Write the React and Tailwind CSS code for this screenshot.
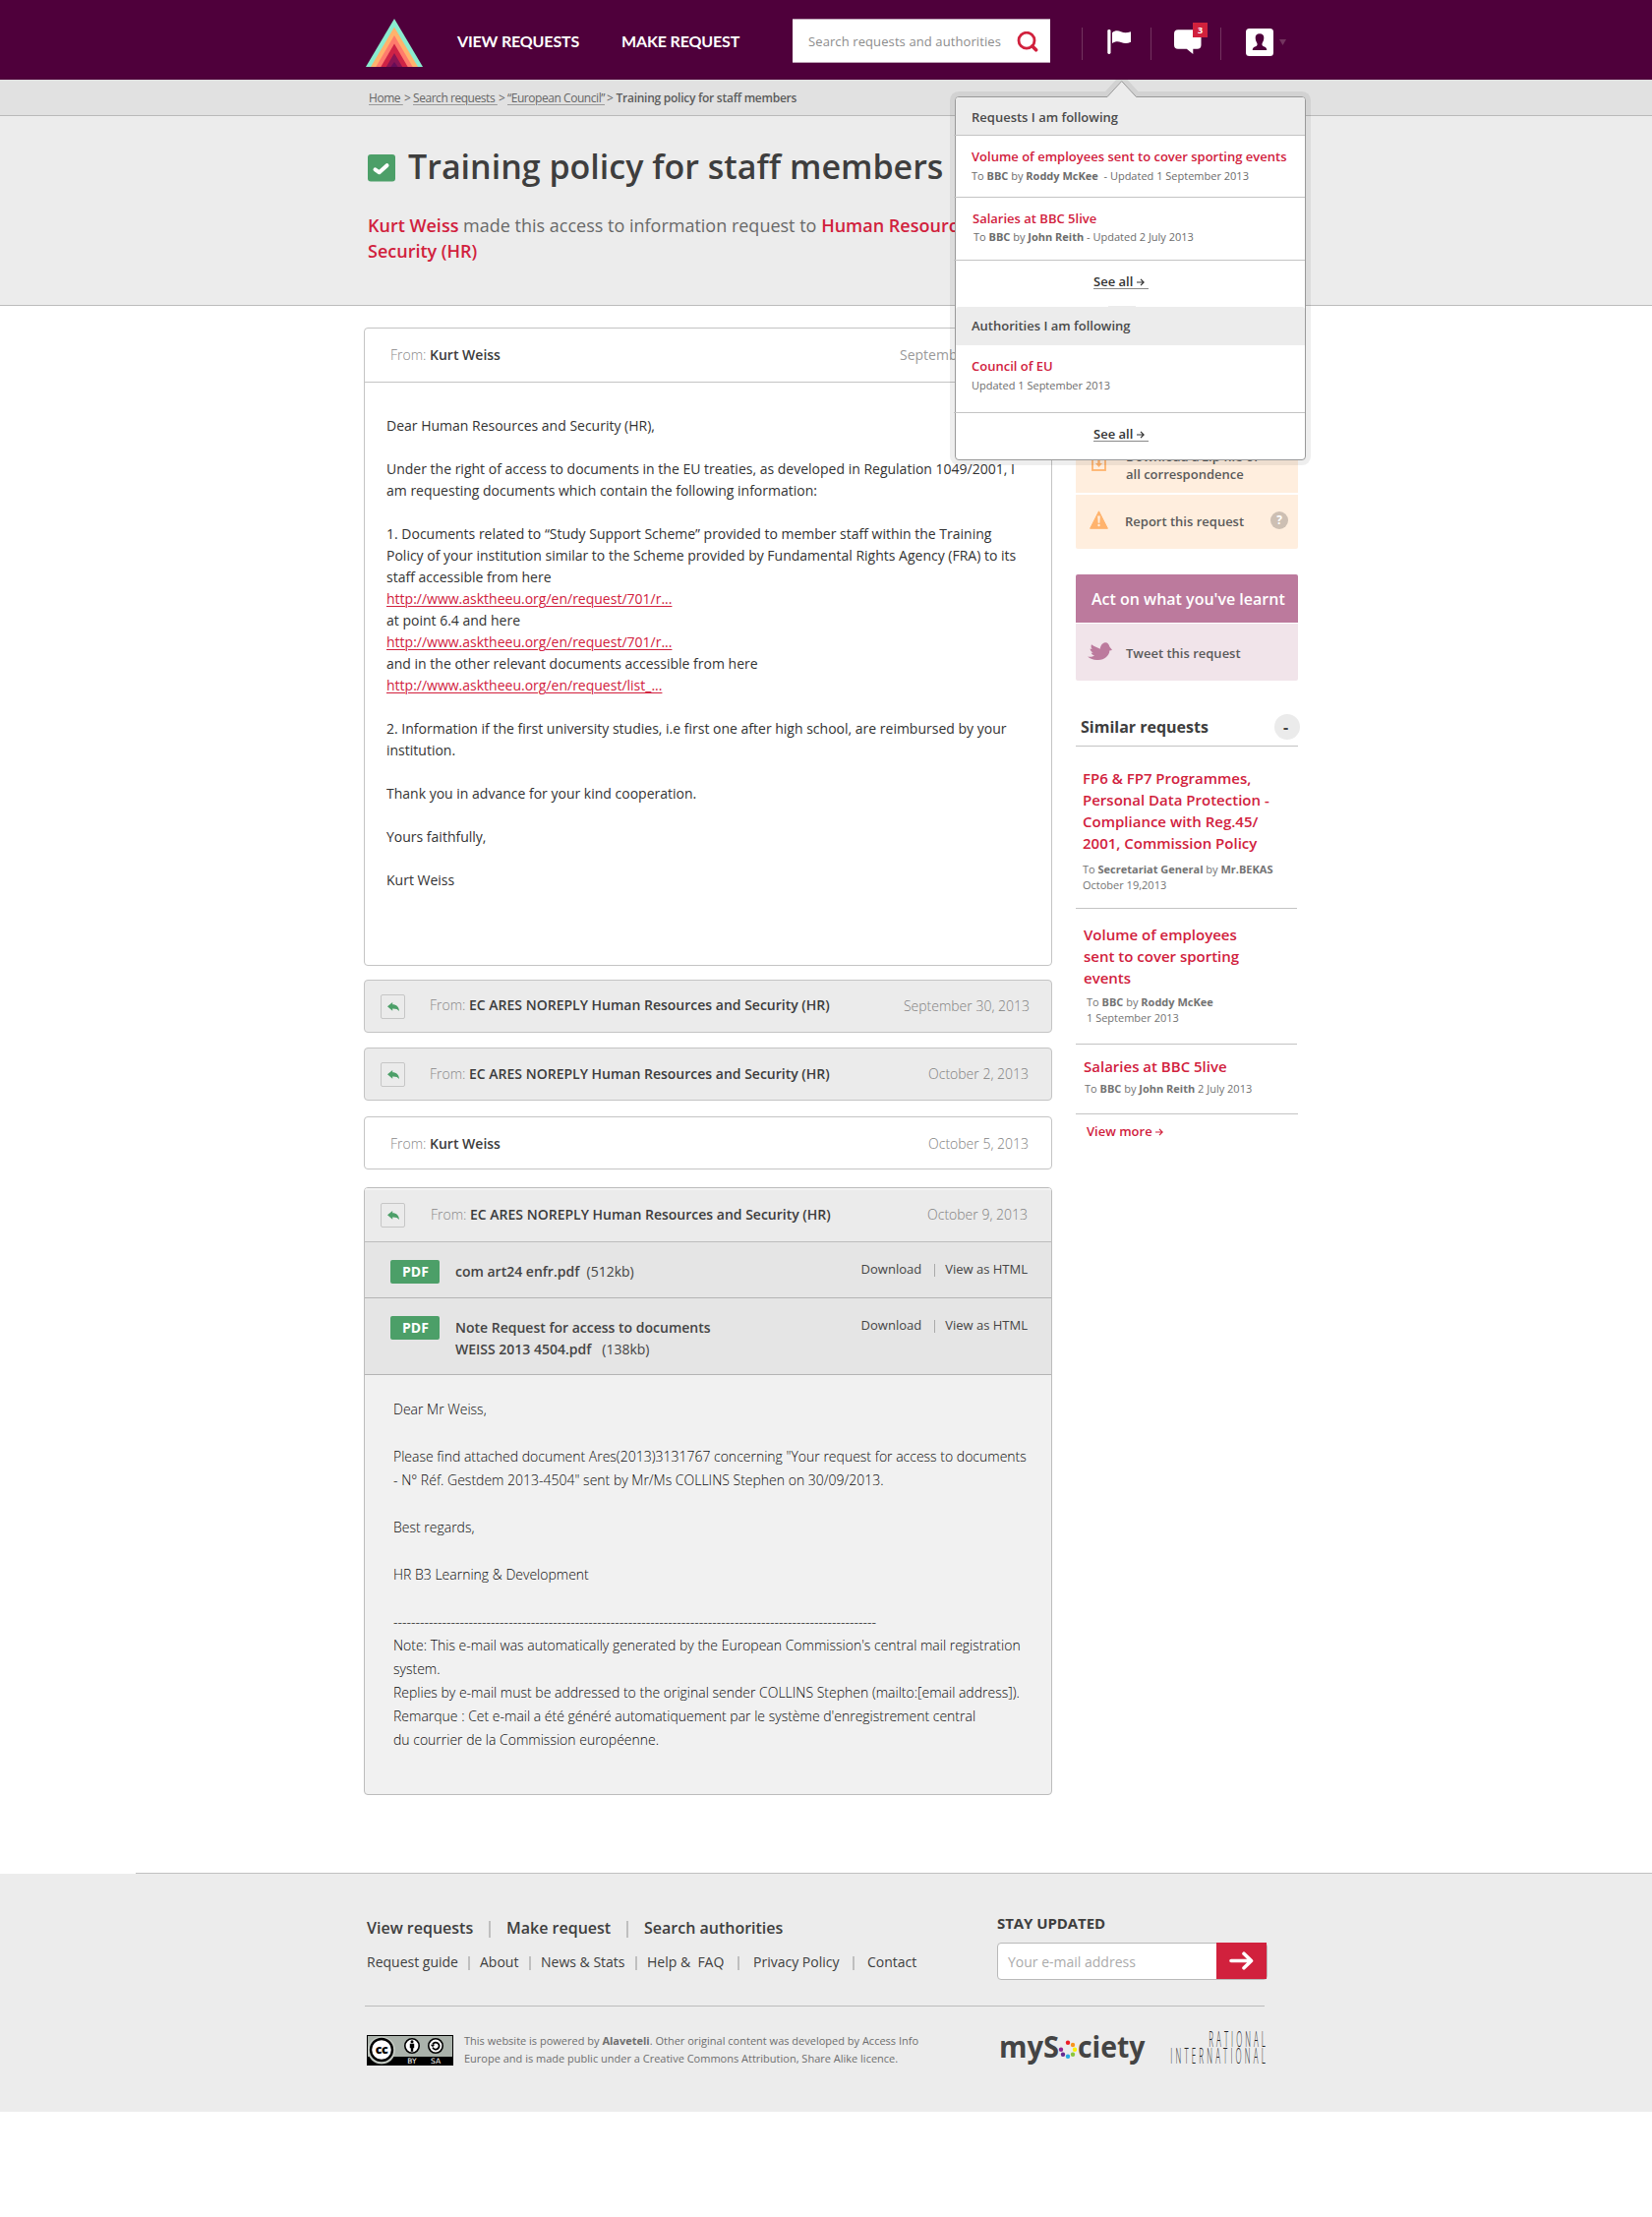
function Arrow({ className }) {
  return (
    <svg viewBox="0 0 8 8" className={className} fill="none" stroke="currentColor" strokeWidth="1.2">
      <path d="M0 4h7M4 0.9 7.1 4 4 7.1" />
    </svg>
  );
}

function Logo() {
  return (
    <svg width="58" height="49" viewBox="0 0 58 49" className="mt-[19px]">
      <path d="M29 0 58 49H0z" fill="#8aecd0" />
      <path d="M29 8.5 53 49H5z" fill="#ffb36d" />
      <path d="M29 17 47.7 49H10.3z" fill="#ff7b6c" />
      <path d="M29 25.5 42.7 49H15.3z" fill="#cf2346" />
      <path d="M29 35 37.2 49H20.8z" fill="#8a1454" />
      <path d="M29 44 32.7 49H25.3z" fill="#650d59" />
    </svg>
  );
}

function Header() {
  return (
    <header className="flex h-[81px] items-start bg-[#4f003b] pl-[372px] text-white">
      <Logo />
      <nav className="mt-[32px] ml-[35px] flex font-['Lato',sans-serif] text-[16px] leading-[19px] font-bold tracking-[-0.15px] whitespace-nowrap">
        <a className="w-[167px]">VIEW REQUESTS</a>
        <a className="w-[174px]">MAKE REQUEST</a>
      </nav>
      <div className="mt-[19px] flex h-[45px] w-[262px] items-start justify-between border-y border-[#bb9fb4] bg-white pr-[12px] pl-[16px]">
        <span className="mt-[13px] text-[13px] leading-[18px] tracking-[0.1px] whitespace-nowrap text-[#8c8c8c]">Search requests and authorities</span>
        <svg width="22" height="22" viewBox="0 0 22 22" className="mt-[12px]" fill="none" stroke="#d1213d">
          <circle cx="10" cy="9.2" r="8" strokeWidth="2.8" />
          <path d="M15.8 15 19.6 18.8" strokeWidth="3.6" strokeLinecap="round" />
        </svg>
      </div>
      <i className="mt-[28px] ml-[32px] h-[33px] w-px bg-[#73345f]" />
      <svg width="24" height="25" viewBox="0 0 24 25" className="mt-[30px] ml-[25px]" fill="#fff">
        <rect x="0.3" y="0" width="3.2" height="25" rx="1.4" />
        <path d="M5 3.2C8 .8 11 .9 14 2.3c3.300 1.300 6 1.100 10 0V12.800c-3.500 1.600-6.500 1.700-10 .2-3-1.200-6-1-9 1z" />
      </svg>
      <i className="mt-[28px] ml-[20px] h-[33px] w-px bg-[#73345f]" />
      <div className="relative mt-[30px] ml-[23px] h-[25px] w-[28px]">
        <svg width="28" height="25" viewBox="0 0 28 25" fill="#fff">
          <path d="M4 .3H23.500a4 4 0 0 1 4 4V15.700a4 4 0 0 1-4 4H19.300V25L12.800 19.700H4a4 4 0 0 1-4-4V4.300a4 4 0 0 1 4-4z" />
        </svg>
        <span className="absolute -top-[7px] left-[19px] h-[15px] w-[15px] bg-[#d1213d] text-center text-[9px] leading-[15px] font-bold">3</span>
      </div>
      <i className="mt-[28px] ml-[19px] h-[33px] w-px bg-[#73345f]" />
      <svg width="28" height="28" viewBox="0 0 28 28" className="mt-[29px] ml-[25px]">
        <rect width="28" height="28" rx="3.500" fill="#fff" />
        <path d="M14 5.300c3 0 4.500 1.700 4.300 4.500-.1 2.400-.9 3.600-1.700 5.200-.5 1.500 0 2.700 1.500 3.200 2 .6 3 1.300 3.200 3.800H6.700c.2-2.500 1.200-3.200 3.200-3.800 1.500-.5 2-1.700 1.500-3.200-.8-1.600-1.600-2.800-1.700-5.200-.2-2.800 1.300-4.500 4.300-4.500z" fill="#4f003b" />
      </svg>
      <svg width="7" height="6" viewBox="0 0 7 6" className="mt-[40px] ml-[6px]">
        <path d="M0 0h7L3.500 6z" fill="#73345f" />
      </svg>
    </header>
  );
}

function Breadcrumb() {
  return (
    <div className="flex h-[37px] border-b border-[#b9b9b9] bg-[#e1e1e1] pt-[10px] pl-[375px] text-[12px] leading-[17px] tracking-[-0.45px] whitespace-nowrap text-[#666]">
      <a className="w-[36px] underline decoration-[#999] underline-offset-2">Home&nbsp;</a>
      <span className="w-[9px]">&gt;</span>
      <a className="w-[87px] underline decoration-[#999] underline-offset-2">Search requests&nbsp;</a>
      <span className="w-[9px]">&gt;</span>
      <a className="w-[101px] underline decoration-[#999] underline-offset-2">“European Council”</a>
      <span className="w-[9.500px]">&gt;</span>
      <span className="font-semibold tracking-[-0.26px] text-[#5c5c5c]">Training policy for staff members</span>
    </div>
  );
}

function TitleBand() {
  return (
    <section className="h-[193px] border-b border-[#bcbcbc] bg-[#ececec] pt-[28px] pl-[374px]">
      <div className="flex items-start">
        <svg width="28" height="28" viewBox="0 0 28 28" className="mt-[11px]">
          <rect width="28" height="27.500" rx="3" fill="#4c9f68" />
          <path d="M7.500 15.300 11.700 18.300 19.500 11.200" fill="none" stroke="#fff" strokeWidth="4" strokeLinecap="round" strokeLinejoin="round" />
        </svg>
        <h1 className="ml-[13px] text-[34px] leading-[46px] font-semibold whitespace-nowrap text-[#3e3e3e]">Training policy for staff members</h1>
      </div>
      <p className="mt-[24px] w-[740px] text-[18px] leading-[26px] text-[#696969]">
        <b className="font-semibold text-[#d1213d]">Kurt Weiss</b> made this access to information request to{" "}
        <b className="font-semibold text-[#d1213d]">
          Human Resources and
          <br />
          Security (HR)
        </b>
      </p>
    </section>
  );
}

function Divider() {
  return <div className="-ml-[2px] h-px bg-[#c4c4c4]" />;
}

function SeeAll() {
  return (
    <a className="ml-[140px] flex h-[17px] w-[56px] items-start border-b border-[#8a8a8a] text-[13px] leading-[18px] font-semibold whitespace-nowrap text-[#333]">
      See all
      <Arrow className="mt-[6px] ml-[4px] h-[8px] w-[8px]" />
    </a>
  );
}

function FollowMenu() {
  return (
    <div className="absolute top-[98px] left-[971px] h-[370px] w-[357px] rounded-[4px] border border-[#999] bg-white text-[11px] leading-[15px] whitespace-nowrap text-[#6c6c6c] shadow-[0_0_0_5px_rgba(0,0,0,0.065)] [&_b]:font-bold [&_h3]:text-[13px] [&_h3]:leading-[18px] [&_h3]:font-semibold [&_h3]:text-[#d1213d]">
      <svg width="50" height="18" viewBox="0 0 50 18" className="absolute -top-[18px] left-[144px]">
        <path d="M8 12 19 0H30.500L41.500 12H35L24.700 1.300 14.500 12z" fill="#000" fillOpacity="0.065" />
        <path d="M10 18V17.500L24.700 1.500 39.500 17.500V18z" fill="#ececec" />
        <path d="M10 17.500 24.700 1.500 39.500 17.500" fill="none" stroke="#999" />
      </svg>
      <div className="h-[38px] rounded-t-[3px] bg-[#ececec] pt-[11px] pl-[16px] text-[13px] leading-[18px] font-semibold text-[#4a4a4a]">Requests I am following</div>
      <Divider />
      <div className="h-[62px] pt-[12px] pl-[16px]">
        <h3>Volume of employees sent to cover sporting events</h3>
        <p className="mt-[3px]">To <b>BBC</b> by <b>Roddy McKee</b>&nbsp; - Updated 1 September 2013</p>
      </div>
      <Divider />
      <div className="h-[63px] pt-[12px] pl-[17px]">
        <h3>Salaries at BBC 5live</h3>
        <p className="mt-[2px] ml-px">To <b>BBC</b> by <b>John Reith</b> - Updated 2 July 2013</p>
      </div>
      <Divider />
      <div className="h-[46px] pt-[12px]">
        <SeeAll />
      </div>
      <div className="ml-[155px] h-px w-[28px] bg-[#ececec]" />
      <div className="h-[39px] rounded-t-[3px] bg-[#ececec] pt-[10px] pl-[16px] text-[13px] leading-[18px] font-semibold text-[#4a4a4a]">Authorities I am following</div>
      <div className="h-[68px] pt-[12px] pl-[16px]">
        <h3>Council of EU</h3>
        <p className="mt-[3px]">Updated 1 September 2013</p>
      </div>
      <Divider />
      <div className="pt-[12px]">
        <SeeAll />
      </div>
    </div>
  );
}

function ReplyButton({ className }) {
  return (
    <span className={"mr-[25px] flex h-[25px] w-[25px] items-center justify-center rounded-[2px] border border-[#c6c6c6] " + className}>
      <svg width="12" height="9" viewBox="0 0 12 9" fill="#4c9f68">
        <path d="M0 4.300 5.200 0V2.300C9.300 2.300 11.600 4.600 12 9 10.500 7 8.500 6.300 5.200 6.400V8.700z" />
      </svg>
    </span>
  );
}

function From({ name, className }) {
  return (
    <span className={"text-[14px] leading-[19px] font-light text-[#888] " + className}>
      From: <b className="font-semibold text-[#3c3c3c]">{name}</b>
    </span>
  );
}

function MessageDate({ children, className }) {
  return <span className={"ml-auto text-[14px] leading-[19px] " + className}>{children}</span>;
}

const HR = "EC ARES NOREPLY Human Resources and Security (HR)";

function Attachment({ name, size, className }) {
  return (
    <div className={"flex items-start border-b border-[#b4b4b4] bg-[#e5e5e5] pt-[18px] pr-[24px] pl-[26px] text-[14px] text-[#444] " + className}>
      <span className="h-[24px] w-[50px] rounded-[2px] bg-[#4c9f68] pt-[2px] pl-px text-center leading-[19px] font-bold text-white">PDF</span>
      <span className="mt-px ml-[16px] leading-[22px] whitespace-pre-line">
        <b className="font-semibold">{name}</b>
        {size}
      </span>
      <span className="ml-auto flex text-[13px] leading-[18px]">
        <a>Download</a>
        <i className="mt-[4px] mr-[10px] ml-[13px] h-[13px] w-px bg-[#aaa]" />
        <a>View as HTML</a>
      </span>
    </div>
  );
}

function Link({ children }) {
  return <a className="text-[#d1213d] underline decoration-1 underline-offset-2">{children}</a>;
}

function Thread() {
  return (
    <div className="w-[700px] pt-[22px] whitespace-nowrap">
      <article className="h-[649px] rounded-[4px] border border-[#c4c4c4]">
        <div className="flex h-[55px] border-b border-[#c4c4c4] pr-[23px] pl-[26px]">
          <From name="Kurt Weiss" className="mt-[17px]" />
          <MessageDate className="mt-[17px] text-[#999]">September 18, 2013</MessageDate>
        </div>
        <div className="pt-[33px] pl-[22px] text-[14px] leading-[22px] whitespace-pre text-[#333]">
          <p>Dear Human Resources and Security (HR),</p>
          <p className="mt-[22px]">Under the right of access to documents in the EU treaties, as developed in Regulation 1049/2001, I</p>
          <p>am requesting documents which contain the following information:</p>
          <p className="mt-[22px]">1. Documents related to “Study Support Scheme” provided to member staff within the Training</p>
          <p>Policy of your institution similar to the Scheme provided by Fundamental Rights Agency (FRA) to its</p>
          <p>staff accessible from here</p>
          <p><Link>http://www.asktheeu.org/en/request/701/r...</Link></p>
          <p>at point 6.4 and here</p>
          <p><Link>http://www.asktheeu.org/en/request/701/r...</Link></p>
          <p>and in the other relevant documents accessible from here</p>
          <p><Link>http://www.asktheeu.org/en/request/list_...</Link></p>
          <p className="mt-[22px]">2. Information if the first university studies, i.e first one after high school, are reimbursed by your</p>
          <p>institution.</p>
          <p className="mt-[22px]">Thank you in advance for your kind cooperation.</p>
          <p className="mt-[22px]">Yours faithfully,</p>
          <p className="mt-[22px]">Kurt Weiss</p>
        </div>
      </article>

      <article className="mt-[14px] flex h-[54px] rounded-[4px] border border-[#c4c4c4] bg-[#ebebeb] pr-[22px] pl-[16px]">
        <ReplyButton className="mt-[14px]" />
        <From name={HR} className="mt-[15px]" />
        <MessageDate className="mt-[16px] font-light text-[#808080]">September 30, 2013</MessageDate>
      </article>
      <article className="mt-[15px] flex h-[54px] rounded-[4px] border border-[#c4c4c4] bg-[#ebebeb] pr-[23px] pl-[16px]">
        <ReplyButton className="mt-[14px]" />
        <From name={HR} className="mt-[16px]" />
        <MessageDate className="mt-[16px] font-light text-[#808080]">October 2, 2013</MessageDate>
      </article>
      <article className="mt-[16px] flex h-[54px] rounded-[4px] border border-[#c4c4c4] pr-[23px] pl-[26px]">
        <From name="Kurt Weiss" className="mt-[17px]" />
        <MessageDate className="mt-[17px] font-light text-[#808080]">October 5, 2013</MessageDate>
      </article>

      <article className="mt-[18px] h-[618px] overflow-hidden rounded-[4px] border border-[#bcbcbc] bg-[#f1f1f1]">
        <div className="flex h-[55px] border-b border-[#bcbcbc] bg-[#ebebeb] pr-[24px] pl-[16px] shadow-[inset_0_2px_0_#f3f3f3]">
          <ReplyButton className="mt-[15px]" />
          <From name={HR} className="mt-[17px] ml-px" />
          <MessageDate className="mt-[17px] font-light text-[#808080]">October 9, 2013</MessageDate>
        </div>
        <Attachment className="h-[57px]" name="com art24 enfr.pdf" size={"\u00a0 (512kb)"} />
        <Attachment className="h-[78px]" name={"Note Request for access to documents\nWEISS 2013 4504.pdf"} size={"\u00a0\u00a0 (138kb)"} />
        <div className="pt-[23px] pl-[29px] text-[14px] leading-[24px] font-light text-[#0a0a0a]">
          <p>Dear Mr Weiss,</p>
          <p className="mt-[24px]">Please find attached document Ares(2013)3131767 concerning "Your request for access to documents</p>
          <p>- N° Réf. Gestdem 2013-4504" sent by Mr/Ms COLLINS Stephen on 30/09/2013.</p>
          <p className="mt-[24px]">Best regards,</p>
          <p className="mt-[24px]">HR B3 Learning &amp; Development</p>
          <p className="mt-[24px]">{"-".repeat(109)}</p>
          <p>Note: This e-mail was automatically generated by the European Commission's central mail registration</p>
          <p>system.</p>
          <p>Replies by e-mail must be addressed to the original sender COLLINS Stephen (mailto:[email address]).</p>
          <p>Remarque : Cet e-mail a été généré automatiquement par le système d'enregistrement central</p>
          <p>du courrier de la Commission européenne.</p>
        </div>
      </article>
    </div>
  );
}

function Sidebar() {
  return (
    <aside className="ml-[24px] w-[226px] pt-[130px] whitespace-nowrap text-[#5a5a5a]">
      <div className="flex h-[60px] items-start bg-[#ffeede] pt-[14px] pl-[16px] text-[13px] leading-[18px] font-semibold">
        <svg width="15" height="17" viewBox="0 0 15 17" className="mt-[7px]">
          <rect x="1" y="1" width="13" height="15" fill="none" stroke="#ffb36d" strokeWidth="1.800" />
          <path d="M6.300 5.500h2.400v3.600h2.300L7.500 13 4 9.100h2.300z" fill="#ffb36d" />
        </svg>
        <span className="ml-[20px]">
          Download a zip file of
          <br />
          all correspondence
        </span>
      </div>
      <div className="mt-[2px] flex h-[55px] items-start rounded-b-[2px] bg-[#ffeede] pl-[14px] text-[13px] leading-[18px] font-semibold">
        <svg width="19" height="19" viewBox="0 0 19 19" className="mt-[16px]">
          <path d="M9.500.8 18.400 18.300H.6z" fill="#ffb36d" stroke="#ffb36d" strokeLinejoin="round" />
          <path d="M8.200 5.500h2.600L10.300 12.800H8.700z" fill="#ffeede" />
          <circle cx="9.500" cy="15" r="1.200" fill="#ffeede" />
        </svg>
        <span className="mt-[18px] ml-[17px]">Report this request</span>
        <span className="mt-[17px] mr-[10px] ml-auto h-[18px] w-[18px] rounded-full bg-[#cdbfb3] text-center text-[12px] leading-[18px] font-bold text-white">?</span>
      </div>

      <div className="mt-[26px] h-[49px] rounded-t-[2px] bg-[#bc7a9d] pt-[14px] pl-[16px] text-[16px] leading-[22px] font-semibold text-white">Act on what you've learnt</div>
      <div className="mt-px flex h-[58px] items-start rounded-b-[2px] bg-[#f1e4ea] pl-[12px] text-[13px] leading-[18px] font-semibold">
        <svg width="25" height="18" viewBox="0 0 25 18" className="mt-[19px]" fill="#bc7a9d">
          <path d="M0 14.500C3 15 5.300 14.600 7 13.400 5.200 13 4.200 12.100 3.800 10.700L5.700 10.500C3.700 9.600 2.700 8.300 2.600 6.500L4.600 7C3.500 5.400 3.300 4 4 2.200 7 4.400 10 5.300 12.800 6.800 13 3.800 14.500.9 18 .2 20.400.1 21.700 1.800 22.300 4.200 22.900 5.500 24.200 6.300 25 8L22.300 8.500C22.500 13 17.500 18 11 18 7 18.200 3 17 0 14.500z" />
        </svg>
        <span className="mt-[21px] ml-[14px]">Tweet this request</span>
      </div>

      <div className="mt-[34px] flex h-[33px] items-start border-b border-[#c4c4c4] pl-[5px]">
        <h2 className="mt-[2px] text-[16px] leading-[22px] font-bold text-[#3e3e3e]">Similar requests</h2>
        <span className="-mr-[2px] ml-auto h-[26px] w-[26px] rounded-full bg-[#ebebeb] pr-[3px] text-center text-[16px] leading-[26px] font-bold text-[#444]">-</span>
      </div>
      <ul className="text-[11px] leading-[16px] text-[#737373] [&_b]:font-bold [&_h3]:text-[15px] [&_h3]:leading-[22px] [&_h3]:font-semibold [&_h3]:text-[#d1213d]">
        <li className="mr-px h-[165px] border-b border-[#c4c4c4] pt-[21px] pl-[7px]">
          <h3>
            FP6 &amp; FP7 Programmes,
            <br />
            Personal Data Protection -
            <br />
            Compliance with Reg.45/
            <br />
            2001, Commission Policy
          </h3>
          <p className="mt-[8px]">
            To <b>Secretariat General</b> by <b>Mr.BEKAS</b>
            <br />
            October 19,2013
          </p>
        </li>
        <li className="mr-px h-[138px] border-b border-[#c4c4c4] pt-[15px] pl-[8px]">
          <h3>
            Volume of employees
            <br />
            sent to cover sporting
            <br />
            events
          </h3>
          <p className="mt-[6px] ml-[3px]">
            To <b>BBC</b> by <b>Roddy McKee</b>
            <br />1 September 2013
          </p>
        </li>
        <li className="h-[71px] border-b border-[#c4c4c4] pt-[11px] pl-[8px]">
          <h3>Salaries at BBC 5live</h3>
          <p className="mt-[4px] ml-px">
            To <b>BBC</b> by <b>John Reith</b> 2 July 2013
          </p>
        </li>
      </ul>
      <a className="mt-[8px] ml-[11px] flex items-start text-[13px] leading-[18px] font-semibold text-[#d1213d]">
        View more
        <Arrow className="mt-[6px] ml-[3px] h-[8px] w-[8px]" />
      </a>
    </aside>
  );
}

function Bar({ className }) {
  return <i className={"w-[2px] bg-[#bfbfbf] " + className} />;
}

function CcBadge() {
  return (
    <svg width="88" height="31" viewBox="0 0 88 31" className="mt-[3px]">
      <rect width="88" height="31" fill="#000" />
      <rect x="1" y="1" width="86" height="21" fill="#aab2ab" />
      <circle cx="15" cy="15.500" r="14" fill="#c3c9c2" />
      <circle cx="15" cy="15" r="11" fill="#fff" stroke="#000" strokeWidth="2.400" />
      <text x="15" y="19" textAnchor="middle" fontFamily="Open Sans, sans-serif" fontWeight="800" fontSize="12.500" letterSpacing="-0.500">cc</text>
      <circle cx="46" cy="11" r="7.200" fill="#fff" stroke="#000" strokeWidth="1.600" />
      <circle cx="46" cy="6.800" r="1.500" />
      <path d="M43.800 8.800h4.400v4.400H47.200v3.600H44.800V13.200H43.800z" />
      <circle cx="70" cy="11" r="7.200" fill="#fff" stroke="#000" strokeWidth="1.600" />
      <path d="M67 9.500A3.500 3.500 0 1 1 67 12.700" fill="none" stroke="#000" strokeWidth="1.800" />
      <path d="M64.800 9.800h4.400L67 12.300z" />
      <text x="46" y="29.300" textAnchor="middle" fill="#fff" fontFamily="DejaVu Sans, sans-serif" fontSize="7.500">BY</text>
      <text x="70" y="29.300" textAnchor="middle" fill="#fff" fontFamily="DejaVu Sans, sans-serif" fontSize="7.500">SA</text>
    </svg>
  );
}

const DOTS = [
  [76, 16.700, "#ed1c24"],
  [81, 19, "#f7941d"],
  [83, 23.700, "#fff200"],
  [81, 28.700, "#8dc63f"],
  [76, 30.700, "#27aae1"],
  [71, 28.700, "#652d90"],
  [69, 23.700, "#92278f"],
];

function PartnerLogos() {
  return (
    <svg width="285" height="50" viewBox="0 0 285 50" className="-mt-[6px] shrink-0" fill="#444" fontFamily="Open Sans, sans-serif">
      <g fontSize="31" fontWeight="700">
        <text x="6" y="32" textLength="61" lengthAdjust="spacingAndGlyphs">myS</text>
        <text x="86" y="32" textLength="68.500" lengthAdjust="spacingAndGlyphs">ciety</text>
      </g>
      {DOTS.map(([x, y, c]) => (
        <circle key={c} cx={x} cy={y} r="2.200" fill={c} />
      ))}
      <g fontSize="22" fontWeight="300" fill="#222">
        <text transform="translate(219.300 21) scale(0.360 1)" textLength="160" lengthAdjust="spacing">RATIONAL</text>
        <text transform="translate(180.300 38) scale(0.360 1)" textLength="268" lengthAdjust="spacing">INTERNATIONAL</text>
      </g>
    </svg>
  );
}

function Footer() {
  return (
    <footer className="mt-[79px] whitespace-nowrap">
      <div className="ml-[138px] h-px bg-[#c0c0c0]" />
      <div className="h-[242px] bg-[#ececec] pl-[371px] text-[#3e3e3e]">
        <div className="flex h-[135px] w-[915px] items-start border-b border-[#bcbcbc]">
          <div className="w-[643px] shrink-0 pt-[44px]">
            <div className="flex pl-[2px] text-[16px] leading-[22px] font-semibold">
              <a className="w-[124px]">View requests</a>
              <Bar className="mt-[4px] h-[17px]" />
              <a className="ml-[16px] w-[122px]">Make request</a>
              <Bar className="mt-[4px] h-[17px]" />
              <a className="ml-[16px]">Search authorities</a>
            </div>
            <div className="mt-[14px] flex pl-[2px] text-[14px] leading-[19px]">
              <a className="w-[103px]">Request guide</a>
              <Bar className="mt-[4px] h-[14px]" />
              <a className="ml-[10px] w-[50px]">About</a>
              <Bar className="mt-[4px] h-[14px]" />
              <a className="ml-[10px] w-[96px]">News &amp; Stats</a>
              <Bar className="mt-[4px] h-[14px]" />
              <a className="ml-[10px] w-[92px]">Help &amp;&nbsp; FAQ</a>
              <Bar className="mt-[4px] h-[14px]" />
              <a className="ml-[14px] w-[101px]">Privacy Policy</a>
              <Bar className="mt-[4px] h-[14px]" />
              <a className="ml-[13px]">Contact</a>
            </div>
          </div>
          <div className="shrink-0 pt-[40px]">
            <h4 className="text-[15px] leading-[20px] font-bold tracking-[-0.08px]">STAY UPDATED</h4>
            <div className="mt-[10px] flex h-[38px] w-[275px] items-start rounded-[4px] border border-[#b9b9b9] bg-white">
              <span className="mt-[9px] ml-[10px] text-[14px] leading-[19px] text-[#ababab]">Your e-mail address</span>
              <span className="-mt-px ml-auto flex h-[37px] w-[51px] items-center justify-center bg-[#d1213d]">
                <svg width="25" height="19" viewBox="0 0 25 19" fill="none" stroke="#fff" strokeWidth="3.600" strokeLinecap="round" strokeLinejoin="round">
                  <path d="M2 9.500H22M15 2.200 22.500 9.500 15 16.800" />
                </svg>
              </span>
            </div>
          </div>
        </div>
        <div className="flex items-start pt-[26px] pl-[2px]">
          <CcBadge />
          <p className="ml-[11px] w-[538px] text-[11px] leading-[18px] text-[#6e6e6e]">
            This website is powered by <b className="font-bold">Alaveteli</b>. Other original content was developed by Access Info
            <br />
            Europe and is made public under a Creative Commons Attribution, Share Alike licence.
          </p>
          <PartnerLogos />
        </div>
      </div>
    </footer>
  );
}

export default function App() {
  return (
    <div className="relative h-[2254px] w-[1680px] overflow-hidden bg-white font-['Open_Sans',sans-serif]">
      <Header />
      <Breadcrumb />
      <TitleBand />
      <main className="flex items-start pl-[370px]">
        <Thread />
        <Sidebar />
      </main>
      <Footer />
      <FollowMenu />
    </div>
  );
}
